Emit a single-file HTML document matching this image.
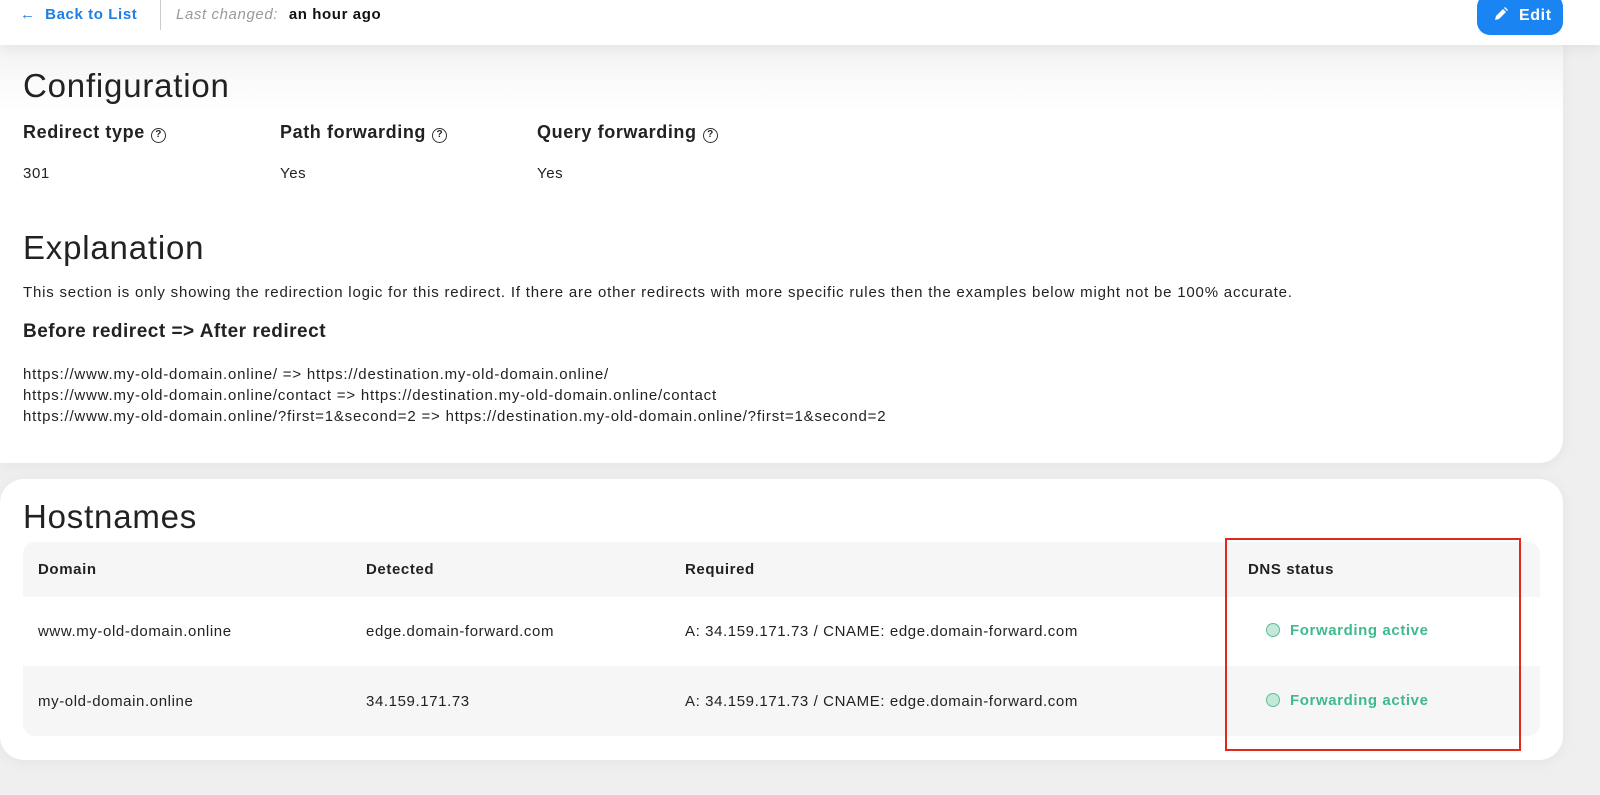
<!DOCTYPE html>
<html><head><meta charset="utf-8"><style>
*{box-sizing:border-box;margin:0;padding:0}
body{width:1600px;height:795px;overflow:hidden;background:#efefef;font-family:"Liberation Sans",sans-serif;color:#222;position:relative;letter-spacing:.6px}
.top{position:absolute;left:0;top:0;width:1600px;height:45px;background:#fff;z-index:2;box-shadow:0 4px 12px rgba(0,0,0,.06)}
.back{position:absolute;left:20px;top:6px;color:#1e7ee6;font-size:15px;font-weight:bold}
.sep{position:absolute;left:160px;top:0;width:1px;height:30px;background:#ccc}
.lc{position:absolute;left:176px;top:6px;font-size:15px;color:#999;font-style:italic}
.lc b{color:#111;font-style:normal;margin-left:6px}
.edit{position:absolute;left:1477px;top:-6px;width:86px;height:41px;background:#1a84f3;border-radius:13px;color:#fff;font-weight:bold;font-size:16px;padding:13px 0 0 42px}
.card{position:absolute;left:0;width:1563px;background:#fff;border-radius:0 0 24px 0;box-shadow:0 2px 14px rgba(0,0,0,.05)}
h1{position:absolute;left:23px;font-weight:normal;font-size:33px;color:#222;letter-spacing:.8px}
.lab{position:absolute;font-weight:bold;font-size:18px;letter-spacing:.6px}
.q{display:inline-block;width:15px;height:15px;border:1.5px solid #333;border-radius:50%;font-size:10px;text-align:center;line-height:12px;margin-left:6px;vertical-align:1px;letter-spacing:0}
.val{position:absolute;font-size:15px}
.t{position:absolute;left:23px;font-size:15px;letter-spacing:.8px}
.row{position:absolute;left:23px;width:1517px;font-size:15px}
.row span{position:absolute}
.dot{display:inline-block;width:14px;height:14px;border-radius:50%;background:#c5e8d9;border:1.5px solid #5cbf98;vertical-align:-2px;margin-right:10px}
.st{color:#3fba8c;font-weight:bold}
</style></head><body>
<div class="top">
<div class="back">&#8592;&nbsp;&nbsp;Back to List</div>
<div class="sep"></div>
<div class="lc">Last changed: <b>an hour ago</b></div>
<div class="edit"><svg style="position:absolute;left:17px;top:13px" width="14" height="14" viewBox="0 0 14 14"><path d="M1 13l1-4 7-7 3 3-7 7z M10 1l1-1 3 3-1 1z" fill="#fff"/></svg>Edit</div>
</div>
<div class="card" style="top:40px;height:423px;background:linear-gradient(#f2f2f2 0,#fff 70px)">
<h1 style="top:27px">Configuration</h1>
<div class="lab" style="left:23px;top:82px">Redirect type<span class="q">?</span></div>
<div class="lab" style="left:280px;top:82px">Path forwarding<span class="q">?</span></div>
<div class="lab" style="left:537px;top:82px">Query forwarding<span class="q">?</span></div>
<div class="val" style="left:23px;top:125px">301</div>
<div class="val" style="left:280px;top:125px">Yes</div>
<div class="val" style="left:537px;top:125px">Yes</div>
<h1 style="top:189px">Explanation</h1>
<div class="t" style="top:244px">This section is only showing the redirection logic for this redirect. If there are other redirects with more specific rules then the examples below might not be 100% accurate.</div>
<div class="t" style="top:281px;font-weight:bold;font-size:19px;letter-spacing:.5px">Before redirect =&gt; After redirect</div>
<div class="t" style="top:324px;line-height:21px">https://www.my-old-domain.online/ =&gt; https://destination.my-old-domain.online/<br>https://www.my-old-domain.online/contact =&gt; https://destination.my-old-domain.online/contact<br>https://www.my-old-domain.online/?first=1&amp;second=2 =&gt; https://destination.my-old-domain.online/?first=1&amp;second=2</div>
</div>
<div class="card" style="top:479px;height:281px;border-radius:24px">
<h1 style="top:19px">Hostnames</h1>
<div class="row" style="top:63px;height:55px;background:#f6f6f6;border-radius:12px 12px 0 0;font-weight:bold;font-size:15px">
<span style="left:15px;top:19px">Domain</span><span style="left:343px;top:19px">Detected</span><span style="left:662px;top:19px">Required</span><span style="left:1225px;top:19px">DNS status</span></div>
<div class="row" style="top:118px;height:69px">
<span style="left:15px;top:26px">www.my-old-domain.online</span><span style="left:343px;top:26px">edge.domain-forward.com</span><span style="left:662px;top:26px">A: 34.159.171.73 / CNAME: edge.domain-forward.com</span><span style="left:1243px;top:25px" class="st"><i class="dot"></i>Forwarding active</span></div>
<div class="row" style="top:187px;height:70px;background:#f6f6f6;border-radius:0 0 12px 12px">
<span style="left:15px;top:27px">my-old-domain.online</span><span style="left:343px;top:27px">34.159.171.73</span><span style="left:662px;top:27px">A: 34.159.171.73 / CNAME: edge.domain-forward.com</span><span style="left:1243px;top:26px" class="st"><i class="dot"></i>Forwarding active</span></div>
</div>
<div style="position:absolute;left:1225px;top:538px;width:296px;height:213px;border:2px solid #e0281f;z-index:3"></div>
</body></html>
